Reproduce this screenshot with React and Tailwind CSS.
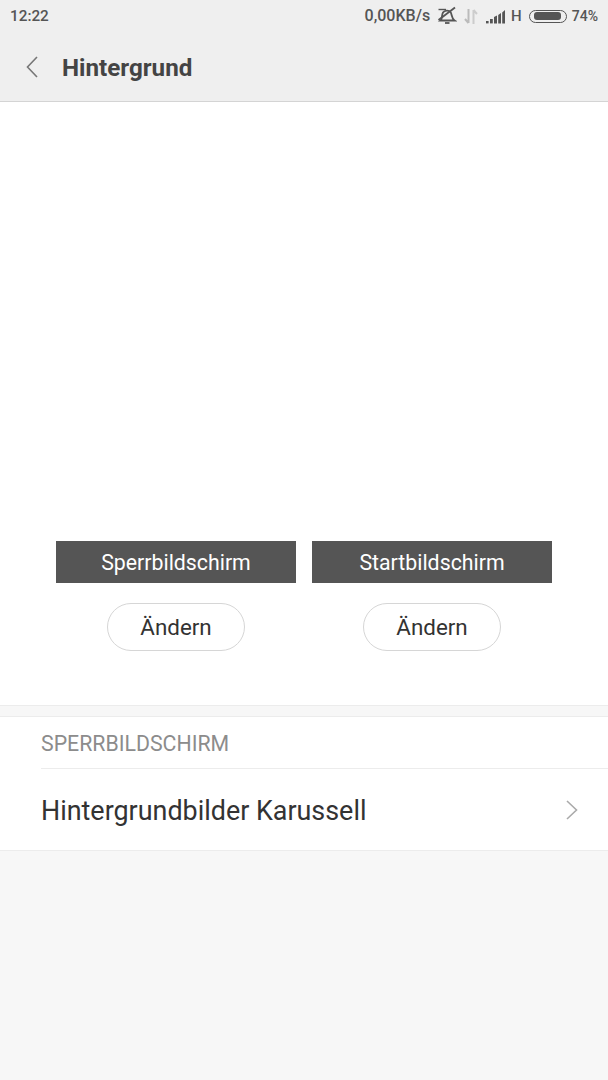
const font = "font-['Roboto',sans-serif]";

function StatusIcons() {
	return (
		<>
			{/* alarm off */}
			<svg width="20" height="20" viewBox="0 0 20 20" fill="none" stroke="#555" strokeWidth="1.8" className="ml-[7px]">
				<path d="M3.5 14.5 C5.5 13 4.5 9 6 6.5 C7.5 4 12 4 13.5 6 C15 8 14.5 12.5 17.5 14.5 Z" />
				<path d="M8 17 h4.5" />
				<path d="M1.5 14 L18 1.5" />
				<path d="M1.5 3.5 L9 3.5" strokeWidth="1.4" />
			</svg>
			{/* data arrows */}
			<svg width="14" height="17" viewBox="0 0 14 17" fill="none" className="ml-[7px]">
				<path d="M4.5 1 V15 M4.5 15 L1 11" stroke="#bbb" strokeWidth="2" />
				<path d="M9.5 16 V2 M9.5 2 L13 6" stroke="#ccc" strokeWidth="2" />
			</svg>
			{/* signal */}
			<svg width="20" height="15" viewBox="0 0 20 15" className="ml-[8px]" fill="#555">
				<rect x="0" y="12" width="2.6" height="2.4" />
				<rect x="4" y="10" width="2.8" height="4.4" />
				<path d="M8 8 L11 6.5 V14.4 H8 Z" />
				<path d="M12.2 6 L15 4 V14.4 H12.2 Z" />
				<path d="M16.2 3.4 L19 1 V14.4 H16.2 Z" />
			</svg>
			<span className="ml-[5px] text-[15px] font-medium">H</span>
			{/* battery */}
			<div className="ml-[7px] flex h-[13px] w-[38px] items-center rounded-full border-[1.5px] border-[#555] p-[1.5px]">
				<div className="ml-[3px] h-full w-[27px] rounded-[3px] bg-[#555]" />
			</div>
			<span className="ml-[5px] text-[14px] font-medium">74%</span>
		</>
	);
}

function Preview({ label }) {
	return (
		<div className="flex w-[240px] flex-col items-center">
			<div className="flex h-[42px] w-full items-center justify-center bg-[#555555] pt-[2px] text-[21.3px] text-white">
				{label}
			</div>
			<button className="mt-[20px] flex h-[48px] w-[138px] items-center justify-center rounded-full border border-[#d6d6d6] bg-white pt-[2px] text-[22.4px] text-[#333]">
				Ändern
			</button>
		</div>
	);
}

export default function App() {
	return (
		<div className={`flex h-[1080px] w-[608px] flex-col bg-[#f7f7f7] ${font}`}>
			<div className="h-[102px] border-b border-[#d4d4d4] bg-[#efefef]">
				<div className="flex h-[32px] items-center pl-[10px] pr-[10px] text-[#555]">
					<span className="text-[15.3px] font-medium">12:22</span>
					<div className="ml-auto flex items-center">
						<span className="text-[16px] font-medium">0,00KB/s</span>
						<StatusIcons />
					</div>
				</div>
				<div className="flex h-[69px] items-center pl-[26px]">
					<svg width="12" height="22" viewBox="0 0 12 22" fill="none" stroke="#777" strokeWidth="1.6">
						<path d="M11 1 L1.5 11 L11 21" />
					</svg>
					<span className="ml-[24px] pt-[3px] text-[24.2px] font-bold text-[#444]">Hintergrund</span>
				</div>
			</div>

			<div className="flex h-[603px] flex-col justify-end bg-white pb-[54px]">
				<div className="flex justify-center gap-[16px]">
					<Preview label="Sperrbildschirm" />
					<Preview label="Startbildschirm" />
				</div>
			</div>

			<div className="h-[11px] border-t border-[#ececec]" />

			<div className="border-y border-[#ececec] bg-white">
				<div className="ml-[41px] flex h-[52px] items-center border-b border-[#ececec] pt-[2px] text-[21.3px] text-[#8c8c8c]">
					SPERRBILDSCHIRM
				</div>
				<div className="flex h-[81px] items-center justify-between pl-[41px] pr-[30px]">
					<span className="pt-[3px] text-[26.9px] text-[#333]">Hintergrundbilder Karussell</span>
					<svg width="12" height="20" viewBox="0 0 12 20" fill="none" stroke="#aaa" strokeWidth="1.6">
						<path d="M1 1 L10.5 10 L1 19" />
					</svg>
				</div>
			</div>
		</div>
	);
}
